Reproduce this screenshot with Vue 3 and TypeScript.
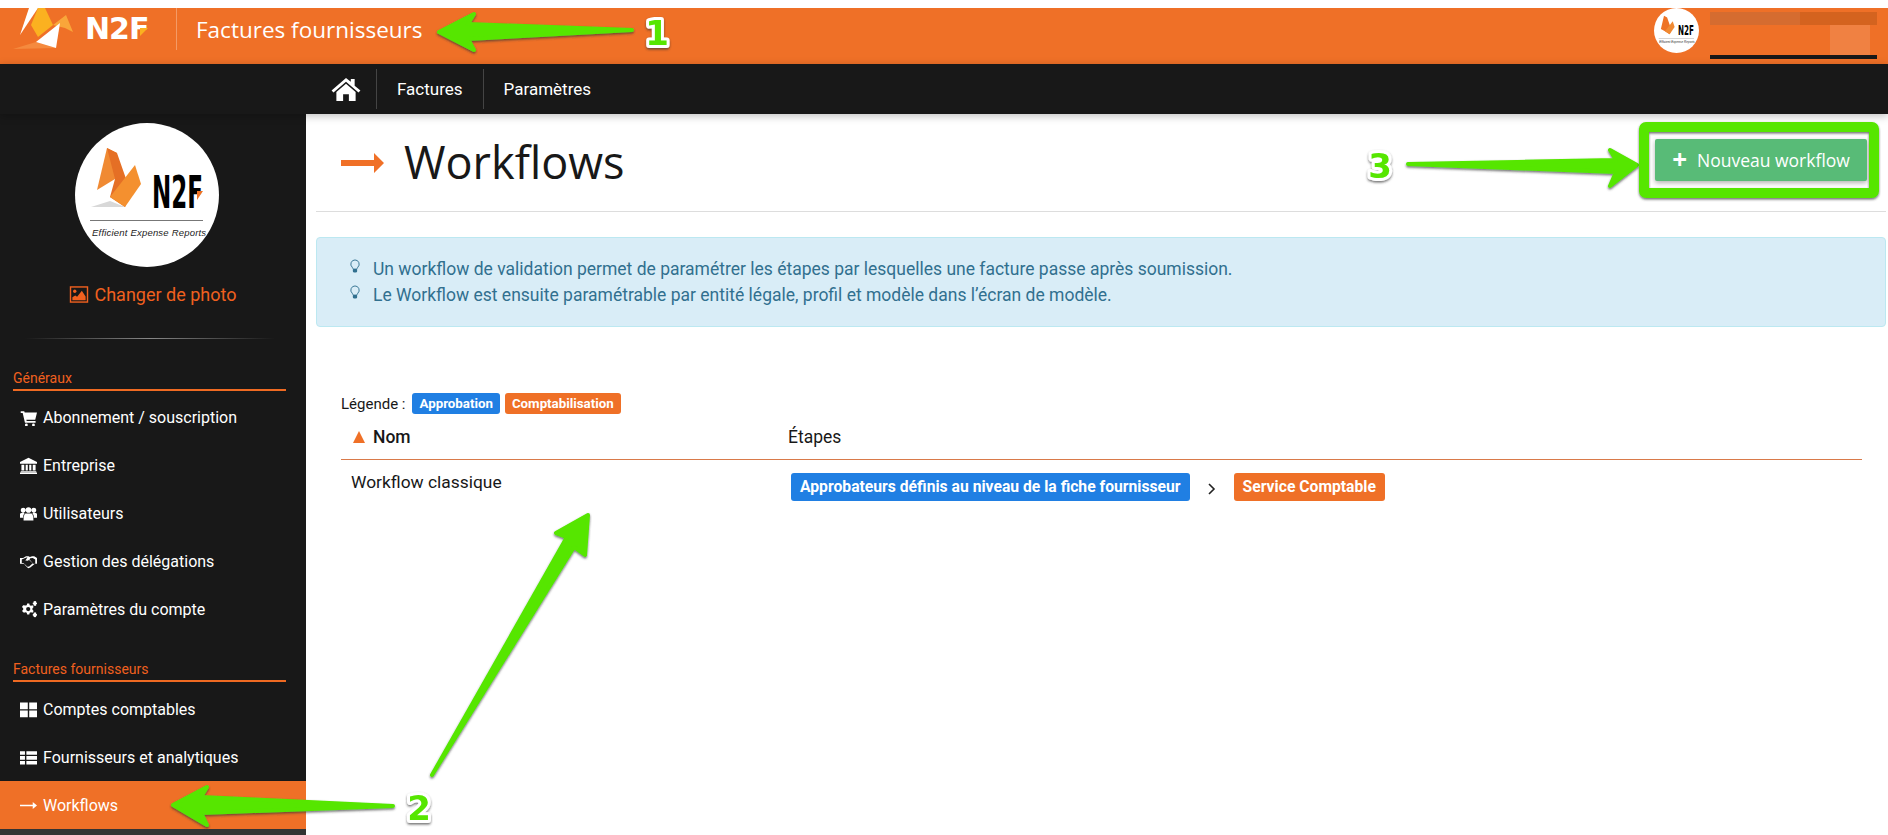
<template>
  <div class="page">
    <header class="topbar">
      <div class="brand">
        <svg class="brand-mark" viewBox="0 0 72 42" width="72" height="42">
          <polygon points="0,41 23,34 43,40" fill="#f58a3e" />
          <polygon points="7,27 16,0 25,0" fill="#fff" />
          <polygon points="25,0 32,0 40,17 25,29 18,17" fill="#fbb120" />
          <polygon points="40,17 53,7 60,24 52,20" fill="#f9a63a" />
          <polygon points="23,34 47,15 43,40" fill="#fff" />
        </svg>
        <span class="brand-name">N2F</span>
      </div>
      <span class="app-title">Factures fournisseurs</span>
      <div class="account">
        <svg class="account-pic" viewBox="0 0 144 144" width="45" height="45">
          <circle cx="72" cy="72" r="72" fill="#fff" />
          <polygon points="22,67 32,25 42,30 56,70 50,84 35,74" fill="#ee7326" />
          <polygon points="35,74 60,42 66,61 50,84" fill="#f08a33" />
          <text transform="translate(77 85) scale(0.523 1)" class="pic-name">N2F</text>
          <rect x="15" y="97" width="113" height="1" fill="#777" />
          <text x="17" y="113" class="pic-tag">Efficient Expense Reports</text>
        </svg>
        <div class="account-mask">
          <div class="mask-top"><span class="mask-a"></span></div>
          <div class="mask-mid"><span class="mask-b"></span></div>
          <div class="mask-line"></div>
        </div>
      </div>
    </header>

    <nav class="navbar">
      <a class="nav-home">
        <svg viewBox="0 0 32 26" width="32" height="25">
          <path d="M16 1 1 14l2 2L16 5l13 11 2-2-6-5V2h-4v3z" fill="#fff" />
          <path d="M16 7 6 15.500V25h7v-7h6v7h7v-9.500z" fill="#fff" />
        </svg>
      </a>
      <a class="nav-link">Factures</a>
      <a class="nav-link">Paramètres</a>
    </nav>

    <div class="body">
      <aside class="sidebar">
        <svg class="avatar" viewBox="0 0 144 144" width="144" height="144">
          <circle cx="72" cy="72" r="72" fill="#fff" />
          <polygon points="16,84 35,78 50,84" fill="#d8d8d8" />
          <polygon points="22,67 32,25 42,30 40,56" fill="#f08a33" />
          <polygon points="32,25 42,30 56,70 50,84 35,74 40,56" fill="#e56f25" />
          <polygon points="35,74 60,42 66,61 50,84" fill="#f4902f" />
          <text transform="translate(77 85) scale(0.523 1)" class="pic-name">N2F</text>
          <polygon points="122,68 128,68 122,77" fill="#ee7326" />
          <rect x="15" y="97" width="113" height="1" fill="#777" />
          <text x="17" y="113" class="pic-tag">Efficient Expense Reports</text>
        </svg>
        <a class="photo-link">
          <svg viewBox="0 0 20 18" width="20" height="17">
            <rect x="1" y="1" width="18" height="16" fill="none" stroke="currentColor" stroke-width="1.500" />
            <circle cx="5.500" cy="5.500" r="1.800" fill="currentColor" />
            <path d="M3 15v-3l3-2 2 1.500L13 5l4 6v4z" fill="currentColor" />
          </svg>
          Changer de photo
        </a>
        <div class="side-divider"></div>

        <template v-for="group in menu" :key="group.title">
          <div class="group-title">{{ group.title }}</div>
          <a v-for="item in group.items" :key="item.label" class="menu-item" :class="{ active: item.active }">
            <svg class="menu-icon" viewBox="0 0 24 24">
              <path :d="item.icon" fill="#fff" fill-rule="evenodd" />
            </svg>
            {{ item.label }}
          </a>
        </template>
        <div class="side-foot"></div>
      </aside>

      <main class="content">
        <div class="page-head">
          <svg class="head-arrow" viewBox="0 0 43 20" width="43" height="20">
            <path d="M0 7h33V0l10 10-10 10v-7H0z" fill="#f07027" />
          </svg>
          <h1>Workflows</h1>
          <button class="new-btn"><span class="plus">+</span>Nouveau workflow</button>
        </div>

        <div class="alert">
          <p v-for="line in tips" :key="line">
            <svg class="bulb" viewBox="0 0 12 16" width="12" height="15">
              <path d="M6 1a4.500 4.500 0 0 0-3 7.800c.6.6 1 1.400 1 2.200h4c0-.8.4-1.600 1-2.200A4.500 4.500 0 0 0 6 1z" fill="none" stroke="#31708f" />
              <rect x="3.800" y="10.500" width="4.400" height="4" rx="1.500" fill="#31708f" />
            </svg>
            {{ line }}
          </p>
        </div>

        <div class="legend">
          <span>Légende :</span>
          <span class="badge blue">Approbation</span>
          <span class="badge orange">Comptabilisation</span>
        </div>

        <div class="table">
          <div class="row head">
            <div class="cell name"><span class="caret"></span>Nom</div>
            <div class="cell steps-head">Étapes</div>
          </div>
          <div class="row">
            <div class="cell wf-name">Workflow classique</div>
            <div class="cell steps">
              <span class="step blue">Approbateurs définis au niveau de la fiche fournisseur</span>
              <svg viewBox="0 0 8 12" width="8" height="12"><path d="M1 1l5 5-5 5" fill="none" stroke="#222" stroke-width="1.600" /></svg>
              <span class="step orange">Service Comptable</span>
            </div>
          </div>
        </div>
      </main>
    </div>

    <!-- annotations drawn over the screenshot -->
    <svg class="notes" viewBox="0 0 1888 835" width="1888" height="835">
      <defs>
        <filter id="sh" x="-10%" y="-10%" width="120%" height="130%">
          <feDropShadow dx="0" dy="1.500" stdDeviation="0.800" flood-color="#333" flood-opacity="0.700" />
        </filter>
      </defs>
      <g fill="#56e600" stroke="#56e600" stroke-width="4" stroke-linejoin="round" filter="url(#sh)">
        <polygon points="439,32 474,14 468,24 632,30 468,39 474,50" />
        <polygon points="173,805 207,787 201,797 393,806 201,813 207,825" />
        <polygon points="588,515 556,533 567,537 432,775 574,547 585,555" />
        <polygon points="1637,165 1610,150 1616,160 1408,164 1616,172 1610,186" />
      </g>
      <rect x="1644" y="127" width="230" height="66" rx="2" fill="none" stroke="#56e600" stroke-width="10" filter="url(#sh)" />
      <g filter="url(#sh)">
        <text x="657" y="45" class="note-num" text-anchor="middle">1</text>
        <text x="419" y="820" class="note-num" text-anchor="middle">2</text>
        <text x="1380" y="178" class="note-num" text-anchor="middle">3</text>
      </g>
    </svg>
  </div>
</template>

<script setup lang="ts">
interface MenuItem {
  label: string
  icon: string
  active?: boolean
}

interface MenuGroup {
  title: string
  items: MenuItem[]
}

const icons = {
  cart: 'M1 3h5l.6 2H24l-2.500 10H9l.4 2H22v2.500H7L3.800 5.500H1zM9 20.500a2 2 0 1 1 0 4 2 2 0 0 1 0-4zM19 20.500a2 2 0 1 1 0 4 2 2 0 0 1 0-4z',
  bank: 'M12 1 0 7v2.500h24V7zM2 11h4v8H2zM8 11h3v8H8zM13 11h3v8h-3zM18 11h4v8h-4zM1 20h22v1.500H1zM0 22h24v2H0z',
  users: 'M12 3a4 4 0 1 1 0 8 4 4 0 0 1 0-8zM4.500 4a3.500 3.500 0 1 1 0 7 3.500 3.500 0 0 1 0-7zM19.500 4a3.500 3.500 0 1 1 0 7 3.500 3.500 0 0 1 0-7zM0 12.500c1-1 3-1.500 5-1.500l1.500 1c-1.500 1-2 3-2 6H0zM24 12.500c-1-1-3-1.500-5-1.500l-1.500 1c1.500 1 2 3 2 6H24zM7.500 12h9c1.500 1 2.500 4 2.500 10H5c0-6 1-9 2.500-10z',
  handshake: 'M0 7h4.500l4-2.500h3.500l2 1 3-1h3l4 2.500v8h-3l-6.500 5.500-3 1-4.500-4.500-1-2H0zM2.500 9v5h2.500l5.500 5.500 2.500-.5 5-4.500-4.500-5.500-2.500 2-3.500-.5 3-4H9zM14.500 7.500 13 10l5.500 5h3V9l-3.500-2z',
  cogs: 'M8 6.500l1.500-.6.6-2.400h3l.6 2.400 1.800.9 2.200-.9 1.600 2.700-1.700 1.700v2l1.700 1.700-1.600 2.700-2.200-.9-1.800.9-.6 2.400h-3l-.6-2.400-1.800-.9-2.200.9L2.800 14l1.700-1.700v-2L2.800 8.600 4.400 5.900zM11.600 8.300a3 3 0 1 0 0 6 3 3 0 0 0 0-6zM20 0l1 .5 1-.5 1 1-.4 1 1.400.6v1.800l-1.400.6.4 1-1 1-1-.5-1 .5-1-1 .4-1-1.400-.6V2.600l1.400-.6-.4-1zM20 16l1 .5 1-.5 1 1-.4 1 1.400.6v1.800l-1.400.6.4 1-1 1-1-.5-1 .5-1-1 .4-1-1.400-.6v-1.800l1.400-.6-.4-1z',
  grid: 'M0 2h11v9.500H0zM13 2h11v9.500H13zM0 13.500h11V23H0zM13 13.500h11V23H13z',
  list: 'M0 3h7v5H0zM9 3h15v5H9zM0 10h7v5H0zM9 10h15v5H9zM0 17h7v5H0zM9 17h15v5H9z',
  arrow: 'M0 10.800h18V7l6 5-6 5v-3.800H0z',
}

const menu: MenuGroup[] = [
  {
    title: 'Généraux',
    items: [
      { label: 'Abonnement / souscription', icon: icons.cart },
      { label: 'Entreprise', icon: icons.bank },
      { label: 'Utilisateurs', icon: icons.users },
      { label: 'Gestion des délégations', icon: icons.handshake },
      { label: 'Paramètres du compte', icon: icons.cogs },
    ],
  },
  {
    title: 'Factures fournisseurs',
    items: [
      { label: 'Comptes comptables', icon: icons.grid },
      { label: 'Fournisseurs et analytiques', icon: icons.list },
      { label: 'Workflows', icon: icons.arrow, active: true },
    ],
  },
]

const tips = [
  'Un workflow de validation permet de paramétrer les étapes par lesquelles une facture passe après soumission.',
  'Le Workflow est ensuite paramétrable par entité légale, profil et modèle dans l’écran de modèle.',
]
</script>

<style>
html,
body {
  margin: 0;
  background: #fff;
  overflow: hidden;
}
</style>

<style scoped>
.page {
  position: relative;
  width: 1888px;
  height: 835px;
  padding-top: 8px;
  box-sizing: border-box;
  font-family: Roboto, sans-serif;
  color: #181818;
  overflow: hidden;
  display: flex;
  flex-direction: column;
}
.topbar {
  height: 56px;
  flex: none;
  background: #ef7027;
  display: flex;
  align-items: flex-start;
  color: #fff;
}
.brand {
  width: 177px;
  height: 42px;
  box-sizing: border-box;
  padding-left: 13px;
  display: flex;
  align-items: flex-start;
  border-right: 1px solid #f49a66;
}
.brand-mark {
  flex: none;
}
.brand-name {
  position: relative;
  margin-top: 2px;
  font: 700 30px/38px "DejaVu Sans", sans-serif;
  letter-spacing: -1px;
}
.brand-name::after {
  content: "";
  position: absolute;
  left: 55px;
  top: 18px;
  border-top: 8px solid #fbb120;
  border-right: 8px solid transparent;
}
.app-title {
  margin-left: 19px;
  font: 400 22.500px/44px "Open Sans", sans-serif;
}
.account {
  margin-left: auto;
  display: flex;
  align-items: flex-start;
  align-self: stretch;
}
.account-pic {
  flex: none;
}
.account-mask {
  width: 167px;
  margin-left: 11px;
  margin-right: 11px;
  padding-top: 4px;
}
.mask-top {
  height: 13px;
  background: #d4631f;
}
.mask-a {
  display: block;
  width: 90px;
  height: 13px;
  background: #d56c30;
}
.mask-mid {
  height: 30px;
  display: flex;
  justify-content: flex-end;
  padding-right: 7px;
}
.mask-b {
  width: 40px;
  background: #f08142;
}
.mask-line {
  height: 4px;
  background: #181818;
}
.pic-name {
  font: 700 44px "DejaVu Sans", sans-serif;
  fill: #000;
}
.pic-tag {
  font: italic 9.500px "Liberation Sans", sans-serif;
  letter-spacing: 0.200px;
  fill: #222;
}
.navbar {
  height: 50px;
  flex: none;
  background: #181818;
  display: flex;
  align-items: center;
  padding-left: 330px;
  box-shadow: 0 2px 8px rgba(0, 0, 0, 0.25);
  position: relative;
  z-index: 1;
}
.nav-home {
  width: 46px;
  height: 40px;
  display: flex;
  align-items: center;
  border-right: 1px solid #444;
}
.nav-link {
  height: 40px;
  padding: 0 20px;
  font: 400 17px/40px Roboto, sans-serif;
  color: #fff;
  border-right: 1px solid #444;
}
.nav-link:last-child {
  border-right: 0;
}
.body {
  flex: 1;
  display: flex;
  min-height: 0;
}
.sidebar {
  width: 306px;
  flex: none;
  background: #181818;
  display: flex;
  flex-direction: column;
}
.avatar {
  flex: none;
  margin: 9px 0 0 75px;
}
.photo-link {
  margin-top: 15px;
  height: 24px;
  display: flex;
  align-items: center;
  justify-content: center;
  gap: 5px;
  color: #f0601f;
  font-size: 18px;
}
.side-divider {
  margin: 32px 31px 0 25px;
  height: 1px;
  background: linear-gradient(90deg, transparent, #888 50%, transparent);
}
.group-title {
  margin: 29px 20px 0 13px;
  padding-bottom: 1px;
  line-height: 20px;
  font-size: 14px;
  color: #f0601f;
  border-bottom: 2px solid #ef6a22;
}
.menu-item + .group-title {
  margin-top: 26px;
  margin-bottom: 1px;
}
.group-title + .menu-item {
  margin-top: 2px;
}
.menu-item {
  height: 48px;
  flex: none;
  display: flex;
  align-items: center;
  padding-left: 20px;
  font-size: 16px;
  color: #fff;
}
.menu-item.active {
  background: #ef7027;
}
.menu-icon {
  width: 17px;
  height: 17px;
  margin-right: 6px;
  flex: none;
}
.side-foot {
  margin-top: auto;
  height: 6px;
  background: #333;
}
.content {
  flex: 1;
  min-width: 0;
  padding: 0 2px 0 10px;
}
.page-head {
  height: 97px;
  border-bottom: 1px solid #ddd;
  display: flex;
  align-items: center;
  padding: 0 19px 0 25px;
}
.head-arrow {
  flex: none;
}
h1 {
  margin: -2px 0 0 20px;
  font: 400 45px "Open Sans", sans-serif;
  color: #181818;
}
.new-btn {
  margin-left: auto;
  align-self: flex-start;
  margin-top: 25px;
  width: 212px;
  height: 42px;
  border: 0;
  border-radius: 2px;
  background: #58bb77;
  color: #fff;
  font: 400 17.500px "Open Sans", sans-serif;
  box-shadow: 0 2px 5px rgba(0, 0, 0, 0.3);
}
.plus {
  font-weight: 700;
  font-size: 26px;
  line-height: 20px;
  vertical-align: -2px;
  margin-right: 10px;
}
.alert {
  margin-top: 25px;
  height: 90px;
  box-sizing: border-box;
  padding: 19px 32px;
  background: #d9edf7;
  border: 1px solid #bce8f1;
  border-radius: 4px;
  color: #31708f;
  font-size: 17.500px;
  line-height: 25px;
}
.alert p {
  margin: 0;
  display: flex;
  align-items: flex-start;
  gap: 12px;
}
.alert p + p {
  margin-top: 1px;
}
.bulb {
  flex: none;
  margin-top: 2px;
}
.legend {
  margin: 66px 0 0 25px;
  height: 21px;
  display: flex;
  align-items: center;
  gap: 5px;
  font-size: 15px;
}
.legend span:first-child {
  margin-right: 2px;
}
.badge {
  height: 21px;
  line-height: 21px;
  padding: 0 7px;
  border-radius: 3px;
  color: #fff;
  font-size: 13.300px;
  font-weight: 700;
}
.blue {
  background: #207fe3;
}
.orange {
  background: #ef7027;
}
.table {
  margin: 0 24px 0 25px;
}
.row {
  display: grid;
  grid-template-columns: 447px 1fr;
}
.row.head {
  height: 45px;
  align-items: center;
  border-bottom: 1px solid #d97a4a;
  font-size: 17.500px;
}
.cell.name {
  display: flex;
  align-items: center;
  padding-left: 12px;
  font-weight: 500;
}
.caret {
  width: 0;
  height: 0;
  margin-right: 8px;
  border-left: 6.500px solid transparent;
  border-right: 6.500px solid transparent;
  border-bottom: 12px solid #ef7027;
}
.wf-name {
  padding: 10px 0 0 10px;
  font-size: 17.400px;
  line-height: 24px;
}
.steps {
  padding: 13px 0 0 3px;
  display: flex;
  align-items: flex-start;
}
.steps svg {
  margin: 10px 18px 0 18px;
  flex: none;
}
.step {
  height: 28px;
  line-height: 28px;
  padding: 0 9px;
  border-radius: 3px;
  color: #fff;
  font-size: 15.700px;
  font-weight: 700;
}
.notes {
  position: absolute;
  left: 0;
  top: 0;
  pointer-events: none;
  z-index: 2;
}
.note-num {
  font: 700 34px "DejaVu Sans", sans-serif;
  fill: #56e600;
  stroke: #fff;
  stroke-width: 6px;
  stroke-linejoin: round;
  paint-order: stroke;
}
</style>
